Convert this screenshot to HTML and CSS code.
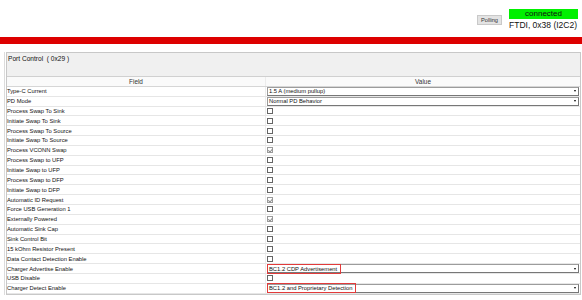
FILE: index.html
```html
<!DOCTYPE html>
<html lang="en">
<head>
  <meta charset="UTF-8">
  <meta name="viewport" content="width=device-width, initial-scale=1.0">
  <title>Port Control</title>
  <link rel="stylesheet" href="styles.css">
</head>
<body>
  <div class="topbar">
    <button class="poll-btn">Polling</button>
    <div class="conn">
      <div class="conn-status">connected</div>
      <div class="conn-name">FTDI, 0x38 (I2C2)</div>
    </div>
  </div>
  <div class="redbar"></div>

  <div class="content">
    <div class="panel">
      <div class="panel-title">Port Control &nbsp;( 0x29 )</div>
      <div class="grid">
        <div class="row head">
          <div class="field">Field</div>
          <div class="value">Value</div>
        </div>
        <div class="row">
          <div class="field">Type-C Current</div>
          <div class="value"><div class="select"><span>1.5 A (medium pullup)</span><i class="arrow"></i></div></div>
        </div>
        <div class="row">
          <div class="field">PD Mode</div>
          <div class="value"><div class="select"><span>Normal PD Behavior</span><i class="arrow"></i></div></div>
        </div>
        <div class="row">
          <div class="field">Process Swap To Sink</div>
          <div class="value"><span class="check"></span></div>
        </div>
        <div class="row">
          <div class="field">Initiate Swap To Sink</div>
          <div class="value"><span class="check"></span></div>
        </div>
        <div class="row">
          <div class="field">Process Swap To Source</div>
          <div class="value"><span class="check"></span></div>
        </div>
        <div class="row">
          <div class="field">Initiate Swap To Source</div>
          <div class="value"><span class="check"></span></div>
        </div>
        <div class="row">
          <div class="field">Process VCONN Swap</div>
          <div class="value"><span class="check checked"></span></div>
        </div>
        <div class="row">
          <div class="field">Process Swap to UFP</div>
          <div class="value"><span class="check"></span></div>
        </div>
        <div class="row">
          <div class="field">Initiate Swap to UFP</div>
          <div class="value"><span class="check"></span></div>
        </div>
        <div class="row">
          <div class="field">Process Swap to DFP</div>
          <div class="value"><span class="check"></span></div>
        </div>
        <div class="row">
          <div class="field">Initiate Swap to DFP</div>
          <div class="value"><span class="check"></span></div>
        </div>
        <div class="row">
          <div class="field">Automatic ID Request</div>
          <div class="value"><span class="check checked"></span></div>
        </div>
        <div class="row">
          <div class="field">Force USB Generation 1</div>
          <div class="value"><span class="check"></span></div>
        </div>
        <div class="row">
          <div class="field">Externally Powered</div>
          <div class="value"><span class="check checked"></span></div>
        </div>
        <div class="row">
          <div class="field">Automatic Sink Cap</div>
          <div class="value"><span class="check"></span></div>
        </div>
        <div class="row">
          <div class="field">Sink Control Bit</div>
          <div class="value"><span class="check"></span></div>
        </div>
        <div class="row">
          <div class="field">15 kOhm Resistor Present</div>
          <div class="value"><span class="check"></span></div>
        </div>
        <div class="row">
          <div class="field">Data Contact Detection Enable</div>
          <div class="value"><span class="check"></span></div>
        </div>
        <div class="row">
          <div class="field">Charger Advertise Enable</div>
          <div class="value"><div class="select"><span class="hl">BC1.2 CDP Advertisement</span><i class="arrow"></i></div></div>
        </div>
        <div class="row">
          <div class="field">USB Disable</div>
          <div class="value"><span class="check"></span></div>
        </div>
        <div class="row">
          <div class="field">Charger Detect Enable</div>
          <div class="value"><div class="select"><span class="hl">BC1.2 and Proprietary Detection</span><i class="arrow"></i></div></div>
        </div>
      </div>
    </div>
  </div>
</body>
</html>
```

FILE: styles.css
```css
body {
  margin: 0;
  font-family: "Liberation Sans", Arial, sans-serif;
  color: #111;
  background: #fff;
}

.topbar {
  display: flex;
  justify-content: flex-end;
  align-items: flex-start;
  height: 37px;
  padding: 9px 4px 0 0;
  box-sizing: border-box;
}

.poll-btn {
  margin: 6px 7px 0 0;
  width: 25px;
  height: 10px;
  padding: 0;
  border: 1px solid #c9c9c9;
  background: #e3e3e3;
  font-family: inherit;
  font-size: 5.7px;
  color: #333;
}

.conn {
  width: 69px;
}

.conn-status {
  height: 10px;
  background: #00f000;
  text-align: center;
  font-size: 8px;
  line-height: 10px;
  color: #111;
}

.conn-name {
  margin-top: 1px;
  font-size: 8.5px;
  line-height: 10px;
  white-space: nowrap;
  color: #111;
}

.redbar {
  height: 7px;
  background: #dd0000;
}

.content {
  margin: 8px 1px 0 4px;
  padding-left: 1px;
  border-left: 1px solid #dcdcdc;
}

.panel {
  border: 1px solid #c8c8c8;
  background: #f0f0f0;
}

.panel-title {
  height: 24px;
  padding: 2px 0 0 1px;
  box-sizing: border-box;
  font-size: 6.6px;
  color: #111;
  border-bottom: 1px solid #d0d0d0;
}

.grid {
  background: #fff;
}

.row {
  display: grid;
  grid-template-columns: 258px 1fr;
  height: 9.85px;
  box-sizing: border-box;
  border-bottom: 1px solid #e6e6e6;
  font-size: 5.8px;
}

.row .field,
.row .value {
  display: flex;
  align-items: center;
  white-space: nowrap;
}

.row .value {
  padding: 0 1px 0 1px;
  border-left: 1px solid #ececec;
}

.row.head {
  font-size: 6.4px;
  color: #333;
  background: #fafafa;
  border-bottom-color: #d6d6d6;
}

.row.head .field,
.row.head .value {
  justify-content: center;
}

.check {
  width: 6px;
  height: 6px;
  box-sizing: border-box;
  border: 1px solid #666;
  background: #fff;
  position: relative;
}

.check.checked {
  border-color: #9a9a9a;
}

.check.checked::after {
  content: "";
  position: absolute;
  left: 1px;
  top: 0;
  width: 1.5px;
  height: 2.5px;
  border: solid #8a8a8a;
  border-width: 0 1px 1px 0;
  transform: rotate(40deg);
}

.select {
  flex: 1;
  display: flex;
  align-items: center;
  justify-content: space-between;
  height: 9px;
  box-sizing: border-box;
  padding-left: 1px;
  border: 1px solid #9c9c9c;
  border-right-color: #777;
  border-bottom-color: #777;
  background: #fff;
}

.select .arrow {
  width: 0;
  height: 0;
  margin-right: 2px;
  border-left: 1.5px solid transparent;
  border-right: 1.5px solid transparent;
  border-top: 2px solid #000;
}

.hl {
  padding-right: 2px;
  outline: 1.5px solid #e23b3b;
  outline-offset: 1px;
}
```
